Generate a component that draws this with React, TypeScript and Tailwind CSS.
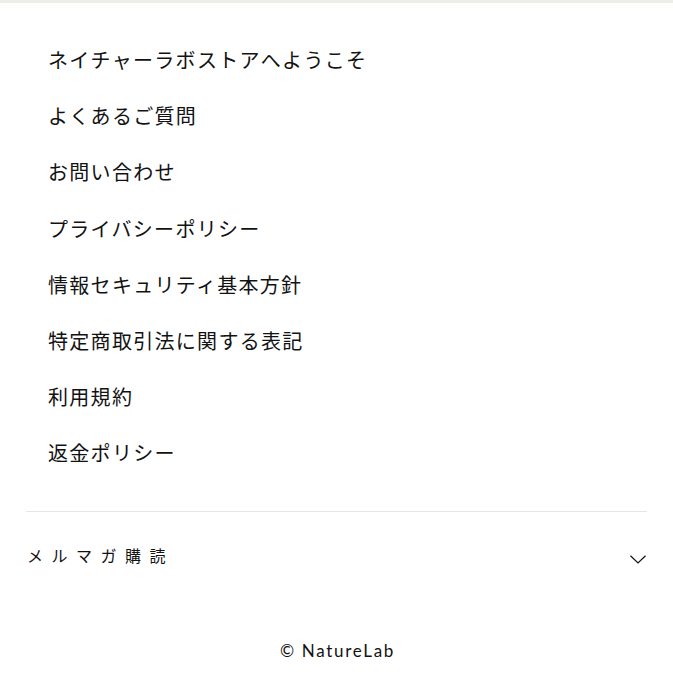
import React from "react";

const items = [
  "ネイチャーラボストアへようこそ",
  "よくあるご質問",
  "お問い合わせ",
  "プライバシーポリシー",
  "情報セキュリティ基本方針",
  "特定商取引法に関する表記",
  "利用規約",
  "返金ポリシー",
];

export default function App() {
  return (
    <div className="min-h-[683px] w-full bg-white text-[#121212]" style={{ fontFamily: '"Noto Sans CJK JP", "Noto Sans", sans-serif' }}>
      <div className="h-[3px] bg-[#ededea]" />
      <div className="px-[26px]">
        <ul className="pl-[22px] pt-[29px] pb-[29px]">
          {items.map((t) => (
            <li key={t} className="flex h-[56.2px] items-center text-[20px] tracking-[1.3px]">
              <a href="#">{t}</a>
            </li>
          ))}
        </ul>
        <div className="border-t border-[#e6e6e6]" />
        <div className="flex h-[86px] items-center justify-between">
          <span className="pl-px text-[16px] tracking-[0.53em]">メルマガ購読</span>
          <svg width="16" height="9" viewBox="0 0 16 9" className="mr-px mt-[9px]" fill="none" stroke="#121212" strokeWidth="1.2">
            <path d="M0.5 0.8 L8 8 L15.5 0.8" />
          </svg>
        </div>
      </div>
      <div className="mt-[41px] flex justify-center pl-[2px]">
        <span className="text-[17px] leading-6 tracking-[0.1em]" style={{ fontFamily: 'Lato, "Liberation Sans", sans-serif' }}>
          © NatureLab
        </span>
      </div>
    </div>
  );
}
